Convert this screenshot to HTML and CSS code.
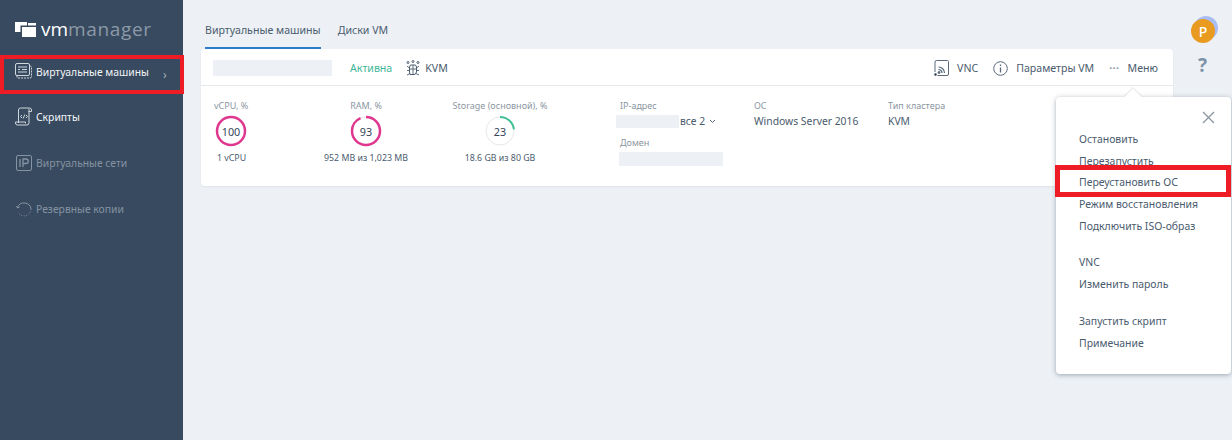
FILE: index.html
```html
<!DOCTYPE html>
<html lang="ru">
<head>
  <meta charset="UTF-8">
  <title>VMmanager</title>
  <link rel="stylesheet" href="styles.css">
</head>
<body>
  <div class="app">
    <aside class="sidebar">
      <div class="logo">
        <svg class="logo-icon" width="21" height="16" viewBox="0 0 21 16">
          <rect x="0" y="1" width="12" height="10" fill="#fff"/>
          <rect x="13" y="2" width="8" height="3" fill="#fff"/>
          <rect x="6.250" y="5.250" width="15.500" height="11.500" fill="#fff" stroke="#384a5f" stroke-width="1.500"/>
        </svg>
        <span class="logo-vm">vm</span><span class="logo-manager">manager</span>
      </div>
      <nav class="nav">
        <a class="nav-item nav-selected">
          <svg width="18" height="20" viewBox="0 0 18 20" fill="none" stroke="#cfd6dd" stroke-width="1">
            <rect x="0.500" y="1.500" width="14" height="12" rx="1.500"/>
            <path d="M3 5h9M3 7.500h2M7 7.500h5M3 10h9"/>
            <path d="M2 13.500v1.500a1 1 0 0 0 1 1h12a1.500 1.500 0 0 0 1.500-1.500V5a1 1 0 0 0-1-1h-1" stroke-dasharray="2 1"/>
          </svg>
          <span class="nav-label">Виртуальные машины</span>
          <span class="nav-arrow">›</span>
        </a>
        <a class="nav-item">
          <svg width="18" height="20" viewBox="0 0 18 20" fill="none" stroke="#cfd6dd" stroke-width="1">
            <path d="M3.500 16V3a2 2 0 0 1 2-2h9a2 2 0 0 1 2 2v1.500h-3M14 2v14a2 2 0 0 1-2 2H2.500a2 2 0 0 1-2-2V15h10v1.500"/>
            <path d="M7 8l-1.500 1.500L7 11M11 8l1.500 1.500L11 11M9.800 7.500l-1.600 4"/>
          </svg>
          <span class="nav-label">Скрипты</span>
        </a>
        <a class="nav-item nav-muted">
          <svg width="16" height="16" viewBox="0 0 16 16" fill="none" stroke="#8593a2" stroke-width="1">
            <rect x="0.500" y="0.500" width="15" height="15" rx="1.500"/>
            <path d="M4 4v8M7 12V4h3a2 2 0 0 1 0 4.500H7" stroke-width="1.300"/>
          </svg>
          <span class="nav-label">Виртуальные сети</span>
        </a>
        <a class="nav-item nav-muted">
          <svg width="16" height="16" viewBox="0 0 16 16" fill="none" stroke="#8593a2" stroke-width="1">
            <path d="M1.500 6.500A7 7 0 0 1 15 8"/>
            <path d="M0.500 5l1 2 2-1"/>
            <path d="M15 8a7 7 0 0 1-13 3.500" stroke-dasharray="1 1.500"/>
          </svg>
          <span class="nav-label">Резервные копии</span>
        </a>
      </nav>
    </aside>

    <main class="main">
      <div class="tabs">
        <a class="tab tab-active">Виртуальные машины</a>
        <a class="tab">Диски VM</a>
      </div>

      <section class="card">
        <header class="card-head">
          <div class="blank blank-name"></div>
          <span class="status">Активна</span>
          <span class="head-kvm">
            <svg width="14" height="16" viewBox="0 0 14 16" fill="none" stroke="#4c5d70" stroke-width="1">
              <circle cx="2" cy="2.500" r="1"/><circle cx="7" cy="1.500" r="1"/><circle cx="12" cy="2.500" r="1"/>
              <path d="M4.500 5h5l1 2v5l-1.500 2.500h-5L3.500 12V7z"/>
              <path d="M1 6l2.500 2M13 6l-2.500 2M1 10.500h2.500M13 10.500h-2.500M1 15l3-1.500M13 15l-3-1.500M7 5v9.500M4 9h6" stroke-width="0.900"/>
            </svg>
            KVM
          </span>
          <div class="head-actions">
            <a class="action">
              <svg width="16" height="16" viewBox="0 0 16 16" fill="none" stroke="#5a6a7b" stroke-width="1">
                <path d="M2 12V2a1.500 1.500 0 0 1 1.500-1.500h11A1 1 0 0 1 15.500 1.500v12.500a1.500 1.500 0 0 1-1.500 1.500H4.500"/>
                <path d="M5.500 7a6 6 0 0 1 6 6M5.500 9.500a3.500 3.500 0 0 1 3.500 3.500" stroke-width="1.200"/>
                <circle cx="6" cy="12.500" r="1" fill="#5a6a7b"/>
                <circle cx="2.500" cy="14.500" r="1" fill="#2c3a48"/>
              </svg>
              VNC
            </a>
            <a class="action">
              <svg width="15" height="15" viewBox="0 0 15 15" fill="none" stroke="#5a6a7b" stroke-width="1">
                <circle cx="7.500" cy="7.500" r="6.800"/>
                <path d="M7.500 6.500v5M7.500 3.500v1.500" stroke-width="1.300"/>
              </svg>
              Параметры VM
            </a>
            <a class="action">
              <span class="dots">···</span>
              Меню
            </a>
          </div>
        </header>

        <div class="card-body">
          <div class="metric metric-cpu">
            <div class="label">vCPU, %</div>
            <div class="gauge">
              <svg width="32" height="32" viewBox="0 0 32 32" fill="none">
                <circle cx="16" cy="16" r="14" stroke="#e0378e" stroke-width="2.500"/>
              </svg>
              <span class="gauge-value">100</span>
            </div>
            <div class="metric-note">1 vCPU</div>
          </div>
          <div class="metric metric-ram">
            <div class="label">RAM, %</div>
            <div class="gauge">
              <svg width="32" height="32" viewBox="0 0 32 32" fill="none">
                <circle cx="16" cy="16" r="14" stroke="#e5e8ea" stroke-width="1"/>
                <circle class="gauge-arc" cx="16" cy="16" r="14" stroke="#e0378e" stroke-width="2.500" stroke-dasharray="81.800 88"/>
              </svg>
              <span class="gauge-value">93</span>
            </div>
            <div class="metric-note">952 MB из 1,023 MB</div>
          </div>
          <div class="metric metric-disk">
            <div class="label">Storage (основной), %</div>
            <div class="gauge">
              <svg width="32" height="32" viewBox="0 0 32 32" fill="none">
                <circle cx="16" cy="16" r="14" stroke="#e5e8ea" stroke-width="1"/>
                <circle class="gauge-arc" cx="16" cy="16" r="14" stroke="#3fbf96" stroke-width="2" stroke-dasharray="20.200 88"/>
              </svg>
              <span class="gauge-value">23</span>
            </div>
            <div class="metric-note">18.6 GB из 80 GB</div>
          </div>

          <div class="info info-ip">
            <div class="label">IP-адрес</div>
            <div class="ip-row">
              <div class="blank blank-ip"></div>
              <span class="value">все 2</span>
              <svg width="7" height="5" viewBox="0 0 7 5" fill="none" stroke="#5a6a7b"><path d="M1 1l2.500 2.500L6 1"/></svg>
            </div>
            <div class="label label-domain">Домен</div>
            <div class="blank blank-domain"></div>
          </div>
          <div class="info info-os">
            <div class="label">ОС</div>
            <div class="value">Windows Server 2016</div>
          </div>
          <div class="info">
            <div class="label">Тип кластера</div>
            <div class="value">KVM</div>
          </div>
        </div>
      </section>
    </main>

    <aside class="rail">
      <div class="avatar">P</div>
      <div class="help">?</div>
    </aside>
  </div>

  <div class="menu">
    <span class="menu-tip"></span>
    <button class="menu-close" aria-label="Закрыть">
      <svg width="13" height="13" viewBox="0 0 13 13" stroke="#8b96a1" stroke-width="1.300"><path d="M1 1l11 11M12 1L1 12"/></svg>
    </button>
    <ul class="menu-group">
      <li>Остановить</li>
      <li>Перезапустить</li>
      <li class="menu-selected">Переустановить ОС</li>
      <li>Режим восстановления</li>
      <li>Подключить ISO-образ</li>
    </ul>
    <ul class="menu-group">
      <li>VNC</li>
      <li>Изменить пароль</li>
    </ul>
    <ul class="menu-group">
      <li>Запустить скрипт</li>
      <li>Примечание</li>
    </ul>
  </div>
</body>
</html>
```

FILE: styles.css
```css
*, *::after {
  box-sizing: border-box;
}
html, body {
  height: 100%;
}
body {
  margin: 0;
  overflow: hidden;
  background-color: #edf1f5;
  font-family: "Noto Sans", Arial, sans-serif;
  font-size: 10.600px;
  color: #4a5b6e;
}
a {
  color: inherit;
}
.app {
  display: flex;
  height: 440px;
}

/* sidebar */
.sidebar {
  flex: 0 0 183px;
  background-color: #384a5f;
}
.logo {
  display: flex;
  align-items: center;
  height: 55px;
  padding: 3px 0 0 15px;
  font-family: "Open Sans", sans-serif;
  font-size: 19px;
  line-height: 1;
}
.logo-icon {
  margin-right: 5px;
}
.logo-vm {
  color: #fff;
  font-weight: 500;
}
.logo-manager {
  color: #8c99a7;
  letter-spacing: 0.650px;
}
.nav-item {
  display: flex;
  align-items: center;
  height: 46px;
  padding-left: 15px;
  font-size: 10.350px;
  color: #f4f6f8;
}
.nav-item svg {
  flex: none;
  width: 18px;
  margin-right: 3px;
}
.nav-selected {
  height: 39px;
  margin-right: -1px;
  border: 4px solid #ee1c25;
  padding: 0 0 5px 11px;
}
.nav-muted {
  color: #8593a2;
}
.nav-arrow {
  margin: 5px 0 0 14px;
  font-size: 12px;
  color: #aab4be;
}

/* main */
.main {
  flex: 1;
  padding: 0 18px;
  min-width: 0;
}
.tabs {
  display: flex;
  gap: 17px;
  height: 49px;
  padding-left: 4px;
}
.tab {
  height: 49px;
  padding-top: 22px;
  line-height: 16px;
}
.tab-active {
  border-bottom: 2px solid #2b7cc9;
}
.card {
  height: 137px;
  background-color: #fff;
  border-radius: 4px;
  box-shadow: 0 1px 2px rgba(56, 74, 95, 0.08);
}
.card-head {
  display: flex;
  align-items: center;
  height: 37px;
  padding: 2px 15px 0 12px;
  border-bottom: 1px solid #e6e9ec;
}
.blank {
  background-color: #edf1f5;
}
.blank-name {
  width: 119px;
  height: 16px;
  margin-top: -1px;
}
.status {
  margin-left: 18px;
  color: #3fb798;
}
.head-kvm {
  display: flex;
  align-items: center;
  gap: 5px;
  margin-left: 14px;
}
.head-actions {
  display: flex;
  align-items: center;
  gap: 15px;
  margin-left: auto;
}
.action {
  display: flex;
  align-items: center;
  gap: 8px;
}
.dots {
  color: #8b96a1;
  font-weight: 700;
  letter-spacing: 0.500px;
}
.card-body {
  display: flex;
  padding-top: 13px;
}
.label {
  font-size: 9px;
  line-height: 13px;
  color: #8b96a1;
}
.metric {
  display: flex;
  flex-direction: column;
  align-items: center;
  font-size: 8.800px;
}
.metric-cpu {
  align-items: flex-start;
  width: 110px;
  padding-left: 13px;
}
.metric-cpu .gauge {
  margin-left: 1px;
}
.metric-cpu .metric-note {
  margin-left: 3px;
}
.metric-ram {
  width: 110px;
}
.metric-disk {
  width: 158px;
  margin-right: 41px;
}
.gauge {
  position: relative;
  width: 32px;
  height: 32px;
  margin-top: 3px;
}
.gauge-arc {
  transform: rotate(-90deg);
  transform-origin: center;
}
.gauge-value {
  position: absolute;
  inset: 0;
  display: flex;
  align-items: center;
  justify-content: center;
  font-size: 10.800px;
  color: #33465a;
}
.metric-note {
  margin-top: 5px;
  line-height: 13px;
  white-space: nowrap;
}
.info {
  width: 134px;
}
.value {
  font-size: 10.350px;
  line-height: 16px;
  margin-top: 1px;
}
.ip-row {
  display: flex;
  align-items: center;
  gap: 4px;
  margin: 1px 0 0 -4px;
}
.ip-row .value {
  margin: 0 0 0 -3px;
}
.blank-ip {
  width: 63px;
  height: 13px;
}
.label-domain {
  margin-top: 7px;
}
.blank-domain {
  width: 104px;
  height: 14px;
  margin: 3px 0 0 -1px;
}

/* right rail */
.rail {
  flex: 0 0 41px;
  display: flex;
  flex-direction: column;
  align-items: flex-start;
  padding-top: 19px;
}
.avatar {
  display: flex;
  align-items: center;
  justify-content: center;
  width: 24px;
  height: 24px;
  border-radius: 50%;
  background-color: #e99a20;
  color: #fff;
  box-shadow: 3px -3px 0 0 #a9bdf2;
  font-size: 14px;
  font-weight: 500;
}
.help {
  margin: 9px 0 0 7px;
  font-size: 19px;
  line-height: 26px;
  font-weight: 700;
  color: #7d93a8;
}

/* popup menu */
.menu {
  position: absolute;
  top: 97px;
  left: 1056px;
  width: 175px;
  height: 277px;
  padding: 32px 0 0 23px;
  font-size: 10.450px;
  background-color: #fff;
  border-radius: 4px;
  box-shadow: 0 1px 5px rgba(56, 74, 95, 0.45);
}
.menu-tip {
  position: absolute;
  top: -6px;
  left: 71px;
  width: 12px;
  height: 12px;
  background-color: #fff;
  transform: rotate(45deg);
  box-shadow: -1px -1px 1px rgba(56, 74, 95, 0.12);
}
.menu-close {
  position: absolute;
  top: 14px;
  right: 16px;
  display: flex;
  padding: 0;
  border: none;
  background: none;
}
.menu-group {
  margin: 0 0 15px;
  padding: 0;
  list-style: none;
}
.menu-group li {
  height: 21.700px;
  line-height: 21.700px;
  white-space: nowrap;
}
.menu-selected {
  position: relative;
}
.menu-selected::after {
  content: "";
  position: absolute;
  top: -7px;
  left: -24px;
  width: 176px;
  height: 32px;
  border: 5px solid #ee1c25;
}
```
